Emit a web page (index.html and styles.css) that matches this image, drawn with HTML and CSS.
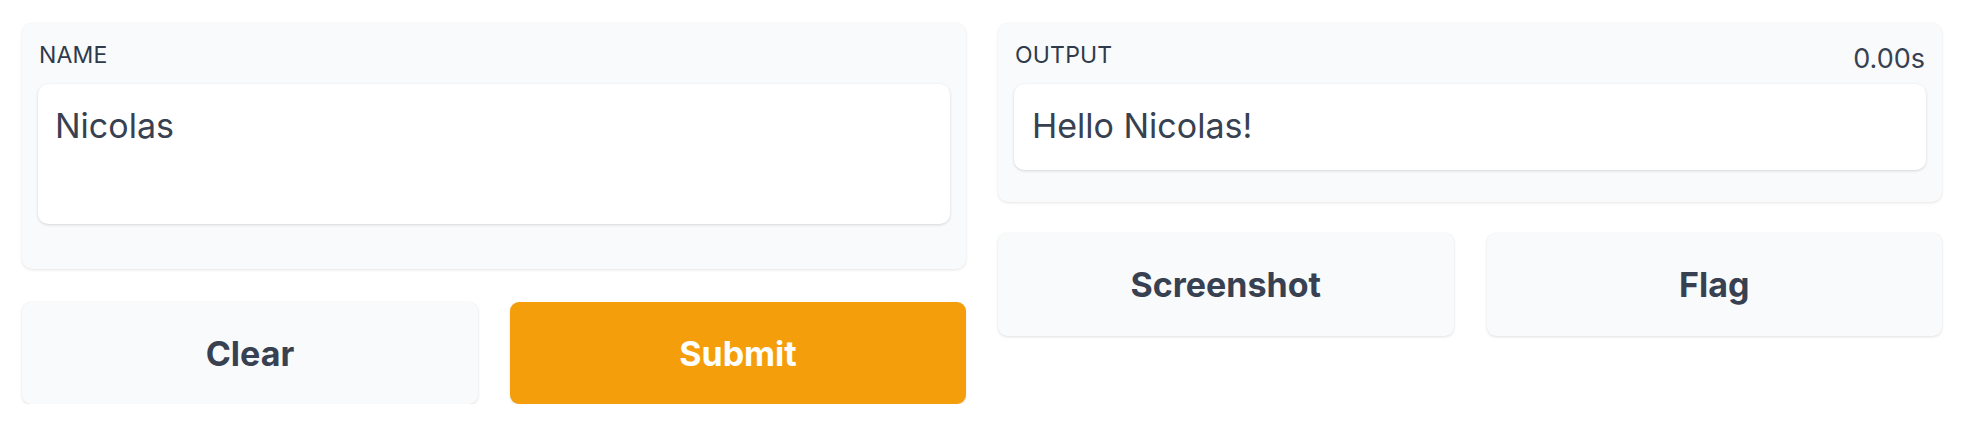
FILE: index.html
```html
<!DOCTYPE html>
<html lang="en">
<head>
<meta charset="utf-8">
<title>Gradio Interface</title>
<link rel="stylesheet" href="styles.css">
</head>
<body>
<div class="app">
  <div class="col col-left">
    <div class="panel panel-input">
      <div class="panel-head">
        <span class="label">NAME</span>
      </div>
      <div class="box box-input">Nicolas</div>
    </div>
    <div class="btn-row">
      <button class="btn">Clear</button>
      <button class="btn btn-primary">Submit</button>
    </div>
  </div>
  <div class="col col-right">
    <div class="panel panel-output">
      <div class="panel-head">
        <span class="label">OUTPUT</span>
        <span class="timer">0.00s</span>
      </div>
      <div class="box box-output">Hello Nicolas!</div>
    </div>
    <div class="btn-row">
      <button class="btn btn-tall">Screenshot</button>
      <button class="btn btn-tall">Flag</button>
    </div>
  </div>
</div>
</body>
</html>
```

FILE: styles.css
```css
* { box-sizing: border-box; }

html, body {
  margin: 0;
  background: #ffffff;
}

body {
  font-family: Inter, "Noto Sans", "Liberation Sans", sans-serif;
  color: #374151;
}

.app {
  display: grid;
  grid-template-columns: 944px 944px;
  column-gap: 32px;
  padding: 23px 26px 0 22px;
  align-items: start;
}

.col {
  display: flex;
  flex-direction: column;
}

.col-left { gap: 33px; }
.col-right { gap: 31px; }

.panel {
  background: #f9fafb;
  border-radius: 10px;
  padding: 18px 16px 32px 16px;
  box-shadow: 0 1px 3px rgba(0, 0, 0, 0.1), 0 0 1px rgba(0, 0, 0, 0.04);
}

.panel-input { padding-bottom: 45px; }

.panel-head {
  display: flex;
  justify-content: space-between;
  align-items: flex-start;
  height: 28px;
  margin-bottom: 15px;
  padding-left: 1px;
}

.label {
  font-size: 23px;
  line-height: 28px;
  letter-spacing: 0.2px;
  color: #2f3a4b;
}

.timer {
  font-size: 27px;
  line-height: 28px;
  margin-top: 4px;
  margin-right: 1px;
}

.box {
  background: #ffffff;
  border-radius: 10px;
  padding: 20px 17px;
  font-size: 34px;
  line-height: 44px;
  box-shadow: 0 1px 3px rgba(0, 0, 0, 0.14), 0 0 1px rgba(0, 0, 0, 0.05);
}

.box-input { height: 140px; }
.box-output { height: 86px; padding-left: 18px; }

.btn-row {
  display: grid;
  grid-template-columns: 1fr 1fr;
  column-gap: 32px;
}

.col-right .btn-row { column-gap: 33px; }

.btn {
  height: 102px;
  border: none;
  border-radius: 9px;
  background: #f9fafb;
  color: #374151;
  font-family: Inter, "Noto Sans", "Liberation Sans", sans-serif;
  font-size: 34px;
  font-weight: 650;
  box-shadow: 0 1px 3px rgba(0, 0, 0, 0.12), 0 0 1px rgba(0, 0, 0, 0.05);
  padding: 0;
}

.btn-tall { height: 103px; }

.btn-primary {
  background: #f59e0b;
  color: #ffffff;
  box-shadow: 0 1px 3px rgba(0, 0, 0, 0.1);
}
```
